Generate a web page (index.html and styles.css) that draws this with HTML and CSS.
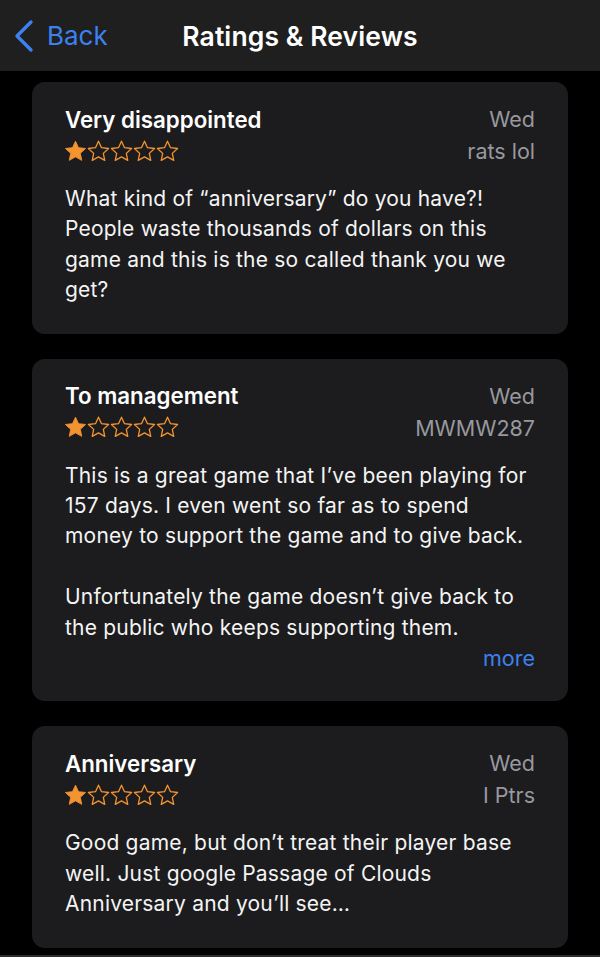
FILE: index.html
```html
<!DOCTYPE html>
<html>
<head>
<meta charset="utf-8">
<link rel="stylesheet" href="styles.css">
</head>
<body>
<header class="nav">
  <a class="back">
    <svg class="chev" width="24" height="34" viewBox="0 0 24 34"><polyline points="17,3 3,17 17,31" fill="none" stroke="#3b82f0" stroke-width="3.4" stroke-linecap="round" stroke-linejoin="round"/></svg>
    <span>Back</span>
  </a>
  <h1 class="title">Ratings &amp; Reviews</h1>
</header>

<main class="list">
  <section class="card">
    <div class="row">
      <h2 class="rtitle">Very disappointed</h2>
      <span class="meta">Wed</span>
    </div>
    <div class="row">
      <div class="stars" data-rating="1"></div>
      <span class="meta">rats lol</span>
    </div>
    <p class="body">What kind of “anniversary” do you have?! People waste thousands of dollars on this game and this is the so called thank you we get?</p>
  </section>

  <section class="card">
    <div class="row">
      <h2 class="rtitle">To management</h2>
      <span class="meta">Wed</span>
    </div>
    <div class="row">
      <div class="stars" data-rating="1"></div>
      <span class="meta">MWMW287</span>
    </div>
    <p class="body">This is a great game that I’ve been playing for 157 days. I even went so far as to spend money to support the game and to give back.<br><br>Unfortunately the game doesn’t give back to the public who keeps supporting them.</p>
    <div class="more">more</div>
  </section>

  <section class="card">
    <div class="row">
      <h2 class="rtitle">Anniversary</h2>
      <span class="meta">Wed</span>
    </div>
    <div class="row">
      <div class="stars" data-rating="1"></div>
      <span class="meta">I Ptrs</span>
    </div>
    <p class="body">Good game, but don’t treat their player base well. Just google Passage of Clouds Anniversary and you’ll see…</p>
  </section>
</main>
<div class="tabline"></div>

<script>
  const P = "M12 2.6l2.75 5.9 6.45.75-4.8 4.45 1.3 6.4L12 16.9l-5.7 3.2 1.3-6.4-4.8-4.45 6.45-.75z";
  document.querySelectorAll('.stars').forEach(el => {
    const r = +el.dataset.rating;
    let h = '';
    for (let i = 0; i < 5; i++) {
      const filled = i < r;
      h += '<svg class="star" width="23" height="23" viewBox="1.5 1.5 21 21"><path d="' + P + '" fill="' + (filled ? '#f39431' : 'none') + '" stroke="#f39431" stroke-width="' + (filled ? '0.8' : '1.2') + '" stroke-linejoin="round"/></svg>';
    }
    el.innerHTML = h;
  });
</script>
</body>
</html>
```

FILE: styles.css
```css
* { box-sizing: border-box; }
html, body {
  margin: 0;
  padding: 0;
  background: #000;
}
body {
  width: 600px;
  height: 957px;
  overflow: hidden;
  font-family: Inter, "Noto Sans", "Liberation Sans", sans-serif;
  color: #fff;
  -webkit-font-smoothing: antialiased;
}
.nav {
  height: 71px;
  background: #1f1f1f;
  display: flex;
  align-items: center;
  position: relative;
}
.back {
  display: flex;
  align-items: center;
  gap: 9px;
  padding-left: 14px;
  color: #3b82f0;
  font-size: 26px;
  letter-spacing: 0;
}
.chev { display: block; }
.title {
  position: absolute;
  left: 0;
  right: 0;
  text-align: center;
  margin: 0;
  font-size: 26.5px;
  font-weight: 600;
  letter-spacing: 0.1px;
  pointer-events: none;
}
.list {
  display: flex;
  flex-direction: column;
  gap: 25px;
  padding: 11px 32px 0;
}
.card {
  background: #1c1c1e;
  border-radius: 13px;
  padding: 21px 33px 28px;
}
.row {
  display: flex;
  justify-content: space-between;
  align-items: center;
  height: 32px;
}
.rtitle {
  margin: 0;
  font-size: 22.3px;
  font-weight: 600;
  letter-spacing: 0;
}
.meta {
  color: #98989e;
  font-size: 21.5px;
  letter-spacing: 0;
}
.stars {
  display: flex;
  margin-left: -1px;
}
.star { display: block; }
.body {
  margin: 17px 0 0;
  font-size: 21px;
  line-height: 30.4px;
  letter-spacing: 0.2px;
  color: #f4f4f4;
}
.more {
  text-align: right;
  color: #3b82f0;
  font-size: 21.5px;
  line-height: 30.4px;
}
.tabline {
  margin-top: 7px;
  height: 3px;
  background: #2c2c2e;
}
```
